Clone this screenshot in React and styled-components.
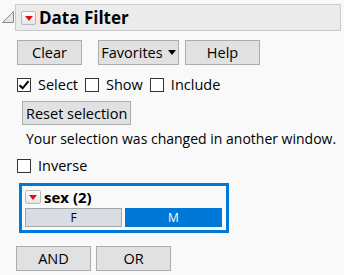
import React from "react";
import styled, { createGlobalStyle } from "styled-components";

const GlobalStyle = createGlobalStyle`
  body {
    margin: 0;
    background: #f9f9f9;
    font-family: "Open Sans", "Noto Sans", sans-serif;
    color: #000;
  }
`;

const Page = styled.div`
  width: 344px;
  height: 275px;
  box-sizing: border-box;
  padding-top: 4px;
  display: flex;
  flex-direction: column;
  font-size: 14.5px;
  overflow: hidden;
`;

const HeaderRow = styled.div`
  display: flex;
  align-items: center;
  height: 27px;
  margin-right: 3px;
`;

const Disclosure = styled.svg`
  width: 15px;
  height: 27px;
  flex: none;
`;

const HeaderBar = styled.div`
  flex: 1;
  height: 27px;
  box-sizing: border-box;
  border: 1px solid #c9c9c9;
  background: #ebebeb;
  display: flex;
  align-items: center;
  padding-left: 5px;
  gap: 3px;
`;

const Title = styled.span`
  font-weight: bold;
  font-size: 17px;
  line-height: 20px;
`;

const MenuIcon = styled.span`
  width: ${p => p.$w || 15}px;
  height: 14px;
  box-sizing: border-box;
  border: 1px solid #b9b9b9;
  border-radius: 2px;
  background: linear-gradient(#fdfdfd, #e6e6e6);
  display: flex;
  align-items: center;
  justify-content: center;
  flex: none;
  &::after {
    content: "";
    border-left: 4px solid transparent;
    border-right: 4px solid transparent;
    border-top: 5px solid #e0101a;
    margin-top: 1px;
  }
`;

const Body = styled.div`
  display: flex;
  flex-direction: column;
  align-items: flex-start;
  padding-left: 17px;
`;

const ButtonRow = styled.div`
  display: flex;
  margin-top: ${p => p.$top}px;
  margin-left: ${p => p.$left || 0}px;
`;

const Button = styled.button`
  height: 25px;
  width: ${p => p.$w}px;
  margin-left: ${p => p.$ml || 0}px;
  box-sizing: border-box;
  border: 1px solid #adadad;
  background: #e1e1e1;
  font-family: inherit;
  font-size: 14.5px;
  color: #000;
  padding: 0;
  display: flex;
  align-items: center;
  justify-content: center;
  gap: 5px;
`;

const Caret = styled.span`
  border-left: 4.5px solid transparent;
  border-right: 4.5px solid transparent;
  border-top: 5px solid #000;
`;

const CheckRow = styled.div`
  display: flex;
  align-items: center;
  height: 14px;
  margin-top: ${p => p.$top}px;
`;

const Box = styled.span`
  width: 14px;
  height: 14px;
  box-sizing: border-box;
  border: 1px solid #333;
  background: #fff;
  flex: none;
  display: flex;
  align-items: center;
  justify-content: center;
  margin-left: ${p => p.$ml || 0}px;
`;

const Label = styled.span`
  margin-left: 7px;
  line-height: 18px;
`;

const ResetButton = styled(Button)`
  margin-left: 5px;
  margin-top: 9px;
  height: 24px;
  padding: 0 3px;
`;

const Message = styled.div`
  margin-left: 9px;
  margin-top: 5px;
  font-size: 14px;
  line-height: 18px;
  white-space: nowrap;
`;

const Panel = styled.div`
  margin-top: 10px;
  margin-left: 2px;
  width: 210px;
  height: 50px;
  box-sizing: border-box;
  border: 3px solid #0078d7;
  padding: 3px 4px 4px 3px;
  display: flex;
  flex-direction: column;
  gap: 3px;
`;

const PanelHead = styled.div`
  display: flex;
  align-items: center;
  height: 16px;
  gap: 3px;
`;

const PanelTitle = styled.span`
  font-weight: bold;
  font-size: 15px;
  line-height: 18px;
`;

const Segments = styled.div`
  display: grid;
  grid-template-columns: 1fr 1fr;
  gap: 3px;
  height: 18px;
`;

const Segment = styled.div`
  box-sizing: border-box;
  border: 1px solid ${p => (p.$on ? "#0078d7" : "#a5a5a5")};
  background: ${p => (p.$on ? "#0078d7" : "#d7dde3")};
  color: ${p => (p.$on ? "#fff" : "#000")};
  font-size: 12px;
  display: flex;
  align-items: center;
  justify-content: center;
`;

const Check = () => (
  <svg width="12" height="12" viewBox="0 0 12 12">
    <path d="M1.5 6.2 L4.6 9.3 L10.5 2.2" fill="none" stroke="#000" strokeWidth="2" />
  </svg>
);

export default function App() {
  return (
    <>
      <GlobalStyle />
      <Page>
        <HeaderRow>
          <Disclosure viewBox="0 0 15 27">
            <polygon points="2.5,18.5 13.5,7.5 13.5,18.5" fill="#e4e4e4" stroke="#8c8c8c" strokeWidth="1" />
          </Disclosure>
          <HeaderBar>
            <MenuIcon />
            <Title>Data Filter</Title>
          </HeaderBar>
        </HeaderRow>
        <Body>
          <ButtonRow $top={9}>
            <Button $w={65}>Clear</Button>
            <Button $w={81} $ml={16}>
              Favorites <Caret />
            </Button>
            <Button $w={75} $ml={6}>Help</Button>
          </ButtonRow>
          <CheckRow $top={13}>
            <Box><Check /></Box>
            <Label>Select</Label>
            <Box $ml={7} />
            <Label>Show</Label>
            <Box $ml={7} />
            <Label>Include</Label>
          </CheckRow>
          <ResetButton>Reset selection</ResetButton>
          <Message>Your selection was changed in another window.</Message>
          <CheckRow $top={11}>
            <Box />
            <Label>Inverse</Label>
          </CheckRow>
          <Panel>
            <PanelHead>
              <MenuIcon $w={16} />
              <PanelTitle>sex (2)</PanelTitle>
            </PanelHead>
            <Segments>
              <Segment>F</Segment>
              <Segment $on>M</Segment>
            </Segments>
          </Panel>
          <ButtonRow $top={13} $left={-1}>
            <Button $w={75}>AND</Button>
            <Button $w={75} $ml={5}>OR</Button>
          </ButtonRow>
        </Body>
      </Page>
    </>
  );
}
